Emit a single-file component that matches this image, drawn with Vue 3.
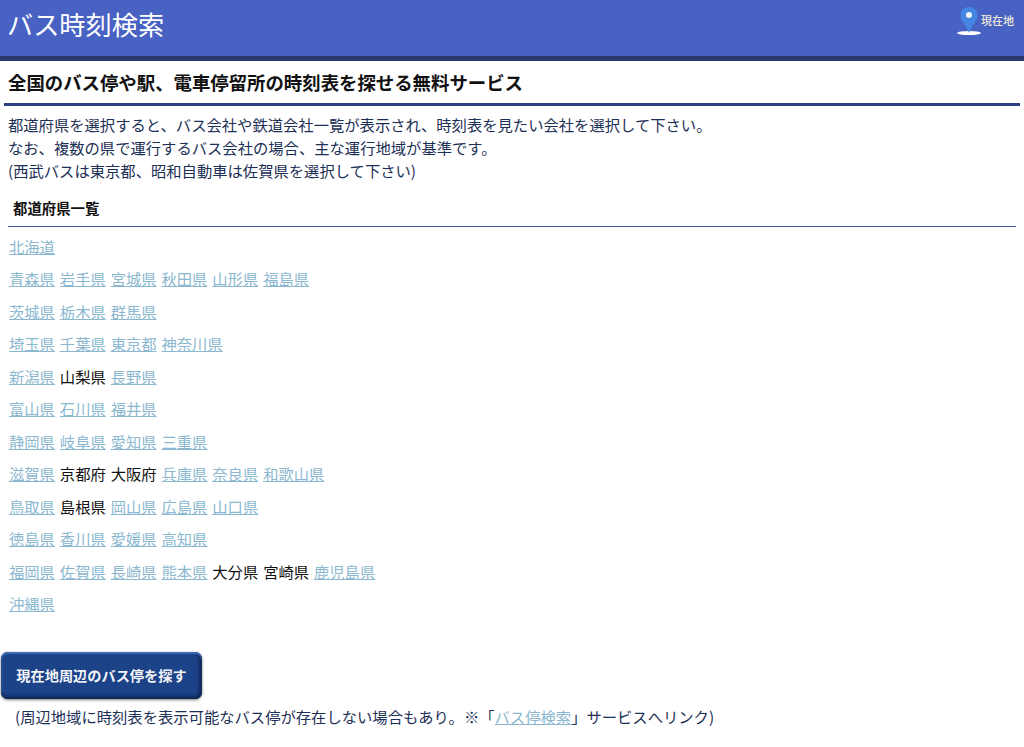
<script setup>
const regions = [
  [['北海道', 1]],
  [['青森県', 1], ['岩手県', 1], ['宮城県', 1], ['秋田県', 1], ['山形県', 1], ['福島県', 1]],
  [['茨城県', 1], ['栃木県', 1], ['群馬県', 1]],
  [['埼玉県', 1], ['千葉県', 1], ['東京都', 1], ['神奈川県', 1]],
  [['新潟県', 1], ['山梨県', 0], ['長野県', 1]],
  [['富山県', 1], ['石川県', 1], ['福井県', 1]],
  [['静岡県', 1], ['岐阜県', 1], ['愛知県', 1], ['三重県', 1]],
  [['滋賀県', 1], ['京都府', 0], ['大阪府', 0], ['兵庫県', 1], ['奈良県', 1], ['和歌山県', 1]],
  [['鳥取県', 1], ['島根県', 0], ['岡山県', 1], ['広島県', 1], ['山口県', 1]],
  [['徳島県', 1], ['香川県', 1], ['愛媛県', 1], ['高知県', 1]],
  [['福岡県', 1], ['佐賀県', 1], ['長崎県', 1], ['熊本県', 1], ['大分県', 0], ['宮崎県', 0], ['鹿児島県', 1]],
  [['沖縄県', 1]],
]
</script>

<template>
  <div class="page">
    <header class="top">
      <div class="title">バス時刻検索</div>
      <a class="loc">
        <svg class="pin" width="26" height="30" viewBox="0 0 26 30">
          <ellipse cx="13" cy="27" rx="12" ry="2" fill="#fff" />
          <path d="M13 1 C8 1 4.500 4.500 4.500 9.500 C4.500 15 10.500 20 13 27 C15.500 20 21.500 15 21.500 9.500 C21.500 4.500 18 1 13 1 Z" fill="#4486e2" />
          <circle cx="13" cy="9" r="3" fill="#f2f6fc" />
        </svg>
        <span>現在地</span>
      </a>
    </header>
    <h1 class="lead">全国のバス停や駅、電車停留所の時刻表を探せる無料サービス</h1>
    <p class="intro">
      都道府県を選択すると、バス会社や鉄道会社一覧が表示され、時刻表を見たい会社を選択して下さい。<br />
      なお、複数の県で運行するバス会社の場合、主な運行地域が基準です。<br />
      (西武バスは東京都、昭和自動車は佐賀県を選択して下さい)
    </p>
    <h2 class="sub">都道府県一覧</h2>
    <div class="list">
      <div v-for="(row, i) in regions" :key="i" class="row">
        <template v-for="p in row" :key="p[0]">
          <a v-if="p[1]" class="link" href="#">{{ p[0] }}</a>
          <span v-else class="plain">{{ p[0] }}</span>
        </template>
      </div>
    </div>
    <a class="btn" href="#">現在地周辺のバス停を探す</a>
    <p class="note">(周辺地域に時刻表を表示可能なバス停が存在しない場合もあり。※「<a class="link" href="#">バス停検索</a>」サービスへリンク)</p>
  </div>
</template>

<style>
html, body { margin: 0; background: #fff; }
</style>

<style scoped>
.page {
  font-family: "Noto Sans CJK JP", "Liberation Sans", sans-serif;
  color: #1c2f55;
  font-size: 15.32px;
  height: 747px;
  overflow: hidden;
}
.top {
  height: 56px;
  background: #4862c4;
  border-bottom: 5px solid #28386f;
  display: flex;
  align-items: center;
  justify-content: space-between;
  padding: 0 10px 0 7px;
  box-sizing: content-box;
}
.title { color: #fff; font-size: 26.2px; line-height: 50px; margin-top: -9px; }
.loc { display: flex; align-items: center; color: #f0ead8; font-size: 11px; font-weight: 500; margin-top: -14px; }
.pin { margin-right: -1px; margin-top: 0; margin-left: -2px; }
.loc span { margin-top: -3px; }
.lead {
  margin: 0 4px;
  padding: 0 4px;
  height: 42px;
  line-height: 43px;
  font-size: 18.4px;
  font-weight: 700;
  color: #111;
  border-bottom: 3px solid #2c3e85;
  box-sizing: content-box;
}
.intro { margin: 0; padding: 7px 8px 0; line-height: 23px; }
.sub {
  margin: 14px 8px 0 8px;
  padding: 0 0 6px 5px;
  font-size: 14.4px;
  line-height: 24px;
  font-weight: 700;
  color: #111;
  border-bottom: 1px solid #4a5aa0;
}
.list { padding: 2.6px 9px 0; }
.row { display: flex; gap: 4.9px; height: 32.500px; line-height: 32.500px; }
.link { color: #8bb8d0; text-decoration: underline; }
.plain { color: #111; }
.btn {
  display: block;
  margin: 32px 0 0 1px;
  width: 201px;
  height: 47px;
  line-height: 46px;
  text-align: center;
  box-sizing: border-box;
  font-size: 14.2px;
  font-weight: 700;
  color: #f2f4f8;
  text-decoration: none;
  border-radius: 7px;
  background: #1c4288;
  box-shadow: inset 0 2px 1px #3e6cb4, inset 0 -3px 3px #122a58, inset 2px 0 2px #2f5a9e, inset -3px 0 3px #122a58, 0 1px 3px #777;
}
.note { margin: 0; padding: 5px 0 0 15px; line-height: 25px; }
</style>
